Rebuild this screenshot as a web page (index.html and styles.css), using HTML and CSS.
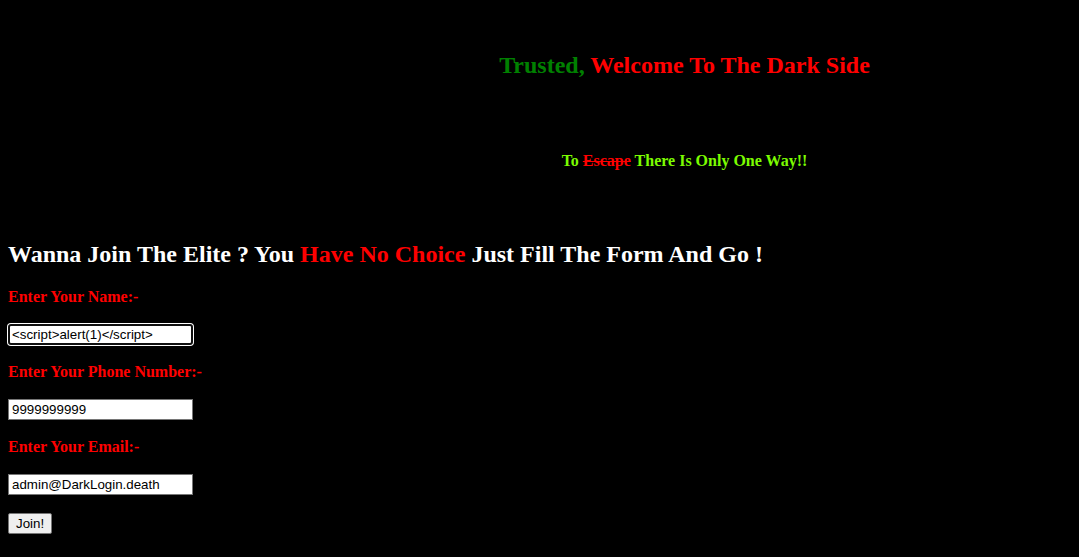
FILE: index.html
```html
<!DOCTYPE html>
<html>
<head>
<meta charset="utf-8">
<title>Dark Login</title>
<link rel="stylesheet" href="styles.css">
</head>
<body>
<header class="intro">
  <h2 class="welcome"><span class="green">Trusted,</span> Welcome To The Dark Side</h2>
  <h4 class="motto">To <s class="red">Escape</s> There Is Only One Way!!</h4>
</header>
<h2 class="call">Wanna Join The Elite ? You <span class="red">Have No Choice</span> Just Fill The Form And Go !</h2>
<form class="join">
  <h4 class="label">Enter Your Name:-</h4>
  <input class="field focused" type="text" value="<script>alert(1)</script>">
  <h4 class="label">Enter Your Phone Number:-</h4>
  <input class="field" type="text" value="9999999999">
  <h4 class="label">Enter Your Email:-</h4>
  <input class="field" type="text" value="admin@DarkLogin.death">
  <div class="actions"><button class="btn" type="button">Join!</button></div>
</form>
</body>
</html>
```
FILE: styles.css
```css
html, body {
  background: #000;
}
body {
  margin: 0;
  padding: 8px;
  font-family: "Liberation Serif", "Times New Roman", serif;
  color: #fff;
}
.intro {
  padding-left: 290px;
  text-align: center;
  padding-top: 44px;
}
.welcome {
  margin: 0;
  font-size: 24px;
  color: #ff0000;
}
.green { color: #008000; }
.red { color: #ff0000; }
.motto {
  margin: 73px 0 0;
  font-size: 16px;
  color: #7cfc00;
}
.call {
  margin: 71px 0 20px;
  font-size: 24px;
  color: #fff;
}
.join { margin: 0; }
.label {
  margin: 18px 0 18px;
  font-size: 16px;
  color: #ff0000;
}
.field {
  display: block;
  box-sizing: border-box;
  width: 185px;
  height: 21px;
  margin: 0;
  padding: 1px 3px;
  border: 1px solid #767676;
  background: #fff;
  font-family: "Liberation Sans", Arial, sans-serif;
  font-size: 13.33px;
  color: #000;
}
.field.focused {
  border: 2px solid #101010;
  border-radius: 3px;
  box-shadow: 0 0 0 1px #fff;
  padding: 0 2px;
}
.actions {
  margin-top: 18px;
}
.btn {
  box-sizing: border-box;
  height: 21px;
  padding: 1px 7px;
  border: 1px solid #767676;
  border-radius: 2px;
  background: #efefef;
  font-family: "Liberation Sans", Arial, sans-serif;
  font-size: 13.33px;
  color: #000;
}
```
